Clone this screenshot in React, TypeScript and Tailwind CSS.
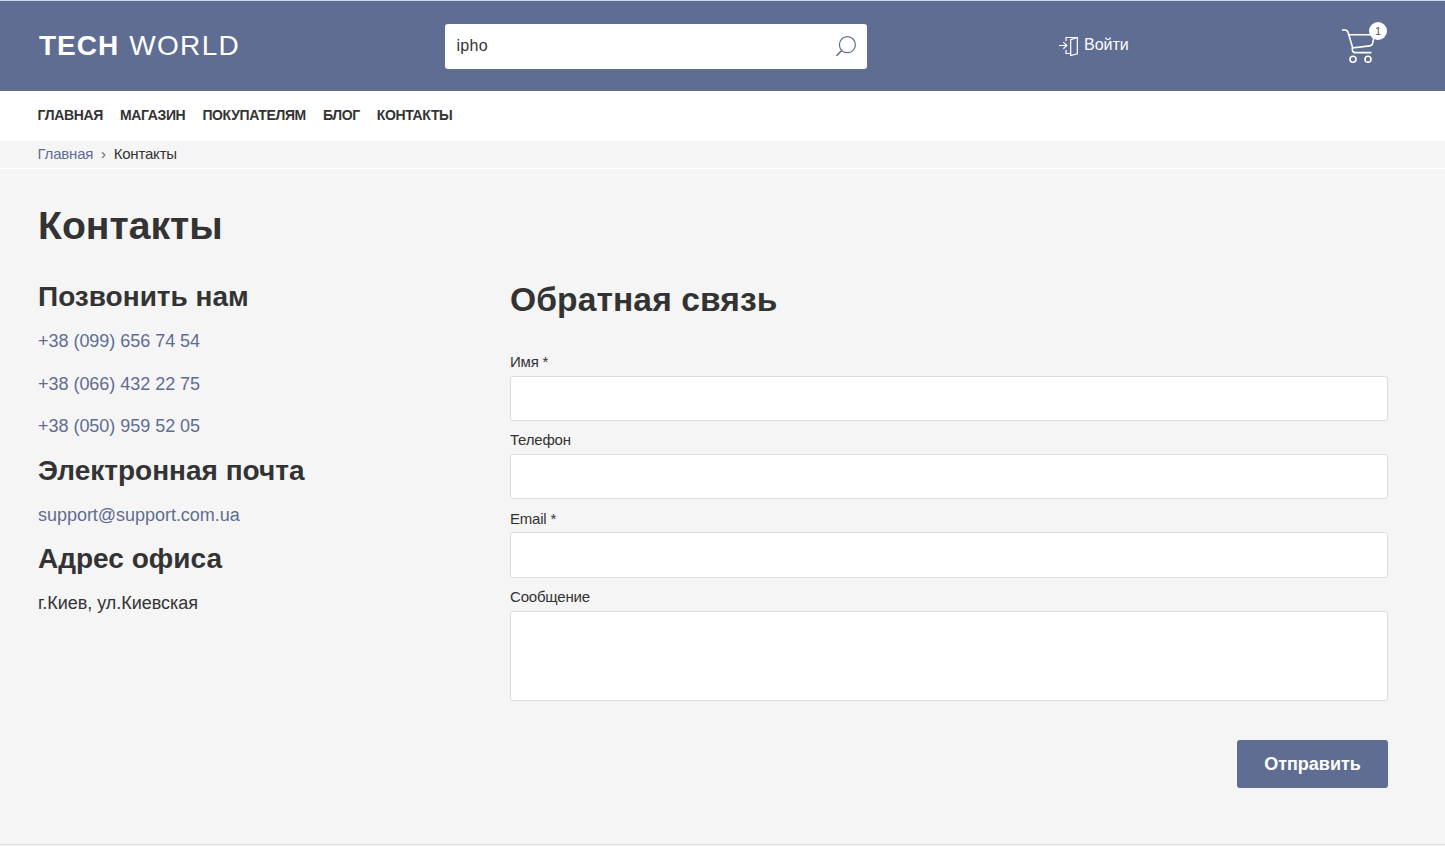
import React from "react";

const navItems = ["ГЛАВНАЯ", "МАГАЗИН", "ПОКУПАТЕЛЯМ", "БЛОГ", "КОНТАКТЫ"];
const phones = ["+38 (099) 656 74 54", "+38 (066) 432 22 75", "+38 (050) 959 52 05"];

function Header() {
  return (
    <header className="flex h-[91px] border-t border-[#c9d5ea] bg-[#5f6d92] pl-[38px] text-white">
      <div className="w-[407px] pt-[29px] pl-px text-[28px] leading-[32px] tracking-[1.3px] whitespace-nowrap">
        <b className="mr-[1px] tracking-[1px]">TECH</b> WORLD
      </div>
      <div className="mt-[23px] flex h-[45px] w-[422px] items-center justify-between rounded-[3px] bg-white pr-[9px] pl-[11.5px]">
        <span className="pb-[2px] text-[16px] leading-[20px] tracking-[0.3px] text-[#333]">ipho</span>
        <svg width="24" height="24" viewBox="0 0 24 24" fill="none" stroke="#5f6d92" strokeWidth="1.2">
          <circle cx="13.4" cy="9.7" r="8" />
          <path d="M7.8 15.4 2.5 20.8" strokeWidth="1.5" />
        </svg>
      </div>
      <div className="ml-[191px] flex w-[284px] items-start pt-[34px]">
        <svg className="mt-[1px]" width="21" height="21" viewBox="0 0 21 21" fill="none" stroke="#fff" strokeWidth="1.2">
          <path d="M1 9.5h7.5M5.4 6.2l3.4 3.3-3.4 3.3M8 5V1.5h11M8 14v3.5h4" />
          <path d="M12.7 3.6 19.3 1.5v16.3l-6.6 1.7z" />
        </svg>
        <span className="ml-[5px] text-[16px] leading-[20px]">Войти</span>
      </div>
      <div className="relative mt-[20px] h-[46px] w-[46px]">
        <svg width="46" height="46" viewBox="0 0 46 46" fill="none" stroke="#fff" strokeWidth="1.6">
          <path d="M0 9h3.2q2.2 0 2.8 2.3L10.7 27M7 13.8h25.4l-1.7 8.4q-.5 2.5-3 2.7L10.4 27q-.8 4.6 3 4.6h16" />
          <circle cx="11" cy="38.2" r="3" />
          <circle cx="26" cy="38.2" r="3" />
        </svg>
        <span className="absolute top-[1px] left-[27px] flex h-[18px] w-[18px] items-center justify-center rounded-full bg-white text-[11px] leading-none text-[#555]">
          1
        </span>
      </div>
    </header>
  );
}

function Field({ label, area = false }: { label: string; area?: boolean }) {
  return (
    <label className="block">
      <span className="block h-[24px] pt-[1.2px] text-[15px] leading-[18px] tracking-[-0.2px]">{label}</span>
      {area ? (
        <textarea className="block h-[90px] w-full resize-none rounded-[3px] border border-[#dcdcdc] bg-white" />
      ) : (
        <input className="mb-[8.9px] block h-[45.3px] w-full rounded-[3px] border border-[#dcdcdc] bg-white" />
      )}
    </label>
  );
}

function SideTitle({ children }: { children: React.ReactNode }) {
  return <h2 className="text-[28px] leading-[32px] font-bold whitespace-nowrap">{children}</h2>;
}

export default function App() {
  return (
    <div className="flex h-[846px] w-[1445px] flex-col overflow-hidden bg-[#f5f5f5] font-['Liberation_Sans',Arial,sans-serif] text-[#333]">
      <Header />
      <nav className="flex h-[50px] shrink-0 gap-[17px] bg-white pt-[16px] pl-[37.6px] text-[14px] leading-[16px] font-bold tracking-[-0.36px]">
        {navItems.map((item) => (
          <a key={item}>{item}</a>
        ))}
      </nav>
      <div className="flex h-[28px] shrink-0 border-b border-white pt-[4px] pl-[37.5px] text-[15px] leading-[18px] tracking-[-0.2px]">
        <a className="text-[#5f6d92]">Главная</a>
        <span className="mr-[8px] ml-[7.7px] text-[#666]">›</span>
        <span>Контакты</span>
      </div>
      <main className="flex h-[676px] shrink-0 flex-col border-b border-[#dcdcdc] pt-[34px] pr-[57px] pl-[38px]">
        <h1 className="text-[39.2px] leading-[46px] font-bold">Контакты</h1>
        <div className="flex">
          <section className="w-[472px] pt-[32px] text-[18px]">
            <SideTitle>Позвонить нам</SideTitle>
            <ul className="mt-[18px] mb-[19px]">
              {phones.map((phone) => (
                <li key={phone} className="h-[42.5px] leading-[20px] tracking-[-0.03px] text-[#5f6d92] last:h-[20px]">
                  {phone}
                </li>
              ))}
            </ul>
            <SideTitle>Электронная почта</SideTitle>
            <p className="mt-[18px] mb-[18px] leading-[20px] tracking-[-0.03px] text-[#5f6d92]">support@support.com.ua</p>
            <SideTitle>Адрес офиса</SideTitle>
            <p className="mt-[18px] leading-[20px] tracking-[-0.03px]">г.Киев, ул.Киевская</p>
          </section>
          <form className="flex w-[878px] flex-col pt-[31px]">
            <h2 className="mb-[32px] text-[33.6px] leading-[40px] font-bold tracking-[0.1px]">Обратная связь</h2>
            <Field label="Имя *" />
            <Field label="Телефон" />
            <Field label="Email *" />
            <Field label="Сообщение" area />
            <button type="button" className="mt-[39.4px] h-[48px] w-[151px] self-end rounded-[3px] bg-[#5f6d92] pt-[1px] text-[18px] font-bold text-white">
              Отправить
            </button>
          </form>
        </div>
      </main>
    </div>
  );
}
